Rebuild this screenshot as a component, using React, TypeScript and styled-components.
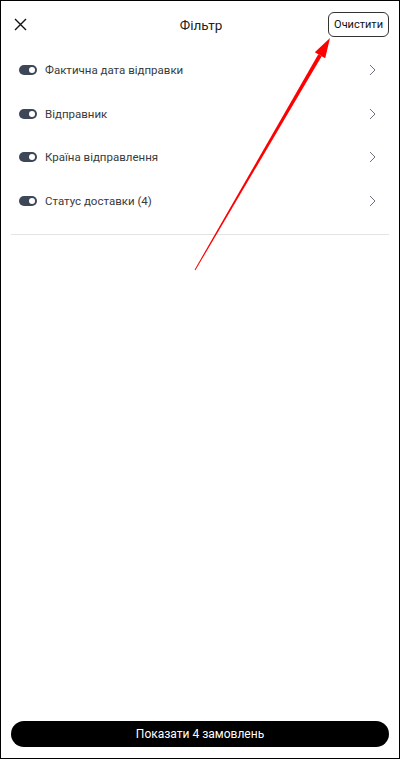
import styled, { createGlobalStyle } from "styled-components";

const GlobalStyle = createGlobalStyle`
  html, body {
    margin: 0;
    padding: 0;
    background: #ffffff;
  }
  * {
    box-sizing: border-box;
  }
`;

const Screen = styled.div`
  position: relative;
  width: 400px;
  height: 759px;
  border: 1px solid #000;
  background: #fff;
  display: flex;
  flex-direction: column;
  font-family: Roboto, "Liberation Sans", sans-serif;
  color: #2b2b2b;
  overflow: hidden;
`;

const Header = styled.div`
  height: 47px;
  display: grid;
  grid-template-columns: 1fr auto 1fr;
  align-items: center;
  padding: 0 10px 0 12px;
`;

const CloseButton = styled.button`
  justify-self: start;
  width: 14px;
  height: 14px;
  padding: 0;
  border: none;
  background: none;
  display: flex;
  align-items: center;
  justify-content: center;
`;

const Title = styled.div`
  font-size: 13.5px;
  color: #222;
`;

const ClearButton = styled.button`
  justify-self: end;
  height: 25px;
  padding: 0 5px;
  border: 1px solid #333;
  border-radius: 6px;
  background: #fff;
  font-family: Roboto, "Liberation Sans", sans-serif;
  font-size: 11px;
  color: #111;
`;

const FilterList = styled.div`
  display: flex;
  flex-direction: column;
`;

const Row = styled.div`
  height: 43.7px;
  display: flex;
  align-items: center;
  padding: 0 23px 0 18px;
`;

const Toggle = styled.div<{ on: boolean }>`
  width: 18px;
  height: 10px;
  border-radius: 5px;
  background: ${(p) => (p.on ? "#3d4757" : "#c9ccd2")};
  position: relative;
  flex-shrink: 0;

  &::after {
    content: "";
    position: absolute;
    top: 2px;
    left: ${(p) => (p.on ? "10px" : "2px")};
    width: 6px;
    height: 6px;
    border-radius: 50%;
    background: #fff;
  }
`;

const Label = styled.span`
  flex: 1;
  margin-left: 8px;
  font-size: 11.5px;
  color: #3a3a3a;
`;

const Divider = styled.div`
  height: 1px;
  margin: 11px 10px 0;
  background: #e3e3e3;
`;

const Spacer = styled.div`
  flex: 1;
`;

const ShowButton = styled.button`
  margin: 0 10px 11px;
  height: 26px;
  border: none;
  border-radius: 13px;
  background: #000;
  color: #fff;
  font-family: Roboto, "Liberation Sans", sans-serif;
  font-size: 12px;
`;

const Annotation = styled.svg`
  position: absolute;
  left: -1px;
  top: -1px;
  pointer-events: none;
`;

const filters = [
  "Фактична дата відправки",
  "Відправник",
  "Країна відправлення",
  "Статус доставки (4)",
];

function Chevron() {
  return (
    <svg width="7" height="12" viewBox="0 0 7 12" fill="none">
      <path d="M1 1 L6 6 L1 11" stroke="#6b7280" strokeWidth="1" />
    </svg>
  );
}

export default function App() {
  return (
    <>
      <GlobalStyle />
      <Screen>
        <Header>
          <CloseButton>
            <svg width="13" height="13" viewBox="0 0 13 13">
              <path d="M1 1 L12 12 M12 1 L1 12" stroke="#111" strokeWidth="1.4" />
            </svg>
          </CloseButton>
          <Title>Фільтр</Title>
          <ClearButton>Очистити</ClearButton>
        </Header>
        <FilterList>
          {filters.map((f) => (
            <Row key={f}>
              <Toggle on />
              <Label>{f}</Label>
              <Chevron />
            </Row>
          ))}
        </FilterList>
        <Divider />
        <Spacer />
        <ShowButton>Показати 4 замовлень</ShowButton>
        <Annotation width="400" height="759" viewBox="0 0 400 759">
          <polygon
            points="195.4,270.3 194.6,269.7 318.3,54.3 321.7,56.3"
            fill="#f00"
          />
          <polygon points="330,38 325.2,58.3 314.8,52.3" fill="#f00" />
        </Annotation>
      </Screen>
    </>
  );
}
